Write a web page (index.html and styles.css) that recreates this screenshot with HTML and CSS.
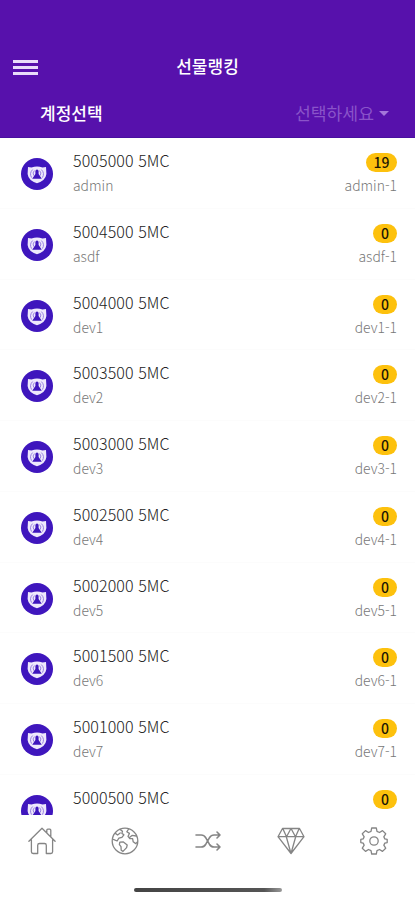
FILE: index.html
```html
<!DOCTYPE html>
<html lang="ko">
<head>
  <meta charset="UTF-8" />
  <meta name="viewport" content="width=device-width, initial-scale=1.0"/>
  <title>선물랭킹</title>
  <link rel="stylesheet" href="styles.css">
</head>
<body>
  <!-- shared avatar -->
  <svg width="0" height="0" class="sprite">
    <symbol id="avatar" viewBox="0 0 32 32">
      <circle cx="16" cy="16" r="16" fill="#3f16bd"/>
      <path d="M7 9 10.5 9.6Q16 7.6 21.5 9.6L25 9 25.4 16Q24.6 22.6 16 25.2 7.4 22.6 6.6 16Z" fill="#eee8fc"/>
      <path d="M10.6 19.6a6.6 6.6 0 0 1 1-8M21.4 19.6a6.6 6.6 0 0 0-1-8M12.8 17.6a4 4 0 0 1 .6-5M19.2 17.6a4 4 0 0 0-.6-5" fill="none" stroke="#8d74dc" stroke-width=".9"/>
      <path d="M14.4 13.2a1.6 1.6 0 0 1 3.2 0v2.8l3.2 4.8h-9.6l3.2-4.8Z" fill="#3f16bd"/>
    </symbol>
  </svg>

  <header>
    <div class="title-bar">
      <button class="menu-btn" aria-label="menu"><span></span><span></span><span></span></button>
      <h1>선물랭킹</h1>
    </div>
    <div class="account-bar">
      <span class="account-label">계정선택</span>
      <span class="account-select">선택하세요 <i class="caret"></i></span>
    </div>
  </header>

  <main>
    <ul class="ranking">
      <li>
        <svg class="avatar"><use href="#avatar"/></svg>
        <div class="info"><strong>5005000 5MC</strong><span>admin</span></div>
        <div class="side"><b class="badge wide">19</b><span>admin-1</span></div>
      </li>
      <li>
        <svg class="avatar"><use href="#avatar"/></svg>
        <div class="info"><strong>5004500 5MC</strong><span>asdf</span></div>
        <div class="side"><b class="badge">0</b><span>asdf-1</span></div>
      </li>
      <li>
        <svg class="avatar"><use href="#avatar"/></svg>
        <div class="info"><strong>5004000 5MC</strong><span>dev1</span></div>
        <div class="side"><b class="badge">0</b><span>dev1-1</span></div>
      </li>
      <li>
        <svg class="avatar"><use href="#avatar"/></svg>
        <div class="info"><strong>5003500 5MC</strong><span>dev2</span></div>
        <div class="side"><b class="badge">0</b><span>dev2-1</span></div>
      </li>
      <li>
        <svg class="avatar"><use href="#avatar"/></svg>
        <div class="info"><strong>5003000 5MC</strong><span>dev3</span></div>
        <div class="side"><b class="badge">0</b><span>dev3-1</span></div>
      </li>
      <li>
        <svg class="avatar"><use href="#avatar"/></svg>
        <div class="info"><strong>5002500 5MC</strong><span>dev4</span></div>
        <div class="side"><b class="badge">0</b><span>dev4-1</span></div>
      </li>
      <li>
        <svg class="avatar"><use href="#avatar"/></svg>
        <div class="info"><strong>5002000 5MC</strong><span>dev5</span></div>
        <div class="side"><b class="badge">0</b><span>dev5-1</span></div>
      </li>
      <li>
        <svg class="avatar"><use href="#avatar"/></svg>
        <div class="info"><strong>5001500 5MC</strong><span>dev6</span></div>
        <div class="side"><b class="badge">0</b><span>dev6-1</span></div>
      </li>
      <li>
        <svg class="avatar"><use href="#avatar"/></svg>
        <div class="info"><strong>5001000 5MC</strong><span>dev7</span></div>
        <div class="side"><b class="badge">0</b><span>dev7-1</span></div>
      </li>
      <li>
        <svg class="avatar"><use href="#avatar"/></svg>
        <div class="info"><strong>5000500 5MC</strong></div>
        <div class="side"><b class="badge">0</b></div>
      </li>
    </ul>
  </main>

  <footer>
    <nav>
      <a><svg viewBox="0 0 28 28"><path d="M.9 14.2 14 1.2l13.1 13M3.4 12.4v12.4q0 1.7 1.7 1.7h4.6v-8.2q0-1.8 1.8-1.8h5q1.8 0 1.8 1.8v8.2h4.6q1.7 0 1.7-1.7V12.4M18.8 5.6V3.2q0-1 1-1h2q1 0 1 1v6.3"/></svg></a>
      <a><svg viewBox="0 0 28 28"><circle cx="14" cy="14" r="12.8"/><path d="M9 2.4 11.5 4.2l-.6 2.2 2 1.4-2 2.6-3 .8-1.8 2.8-3.8-1.6M4.4 6.4 6.6 8l2.6-2M8.8 15.2l3.6-.2 3.8 3-.6 2.6-3.6 3.8-1.8-1.2-.2-3.6-1.6-2ZM17.6 2l-1.8 2.8 2.6 1.6-1.4 3 1.8 2.2h2.8l.6 3.2 2.6 1.8 1.6-1.6M18.8 10.2l2.2-1.8 4.4.6"/></svg></a>
      <a><svg class="shuffle" viewBox="0 0 28 28"><path d="M2 8h5.2q2.8 0 4.6 2.8l3.6 6.4q1.8 2.8 4.6 2.8h6M2 20h5.2q2.8 0 4.6-2.8l3.6-6.4Q17.2 8 20 8h6M23 5l3 3-3 3M23 17l3 3-3 3"/></svg></a>
      <a><svg viewBox="0 0 28 28"><path d="M5.5 1.5h17L27 9.7 14 26.5 1 9.7ZM1 9.7h26M6 2l3.5 7.7L14 1.5l4.5 8.2L22 2M9.3 9.7 14 26.5l4.7-16.8"/></svg></a>
      <a><svg viewBox="0 0 28 28"><path d="M11.7 1h4.6l.7 3.4 2.5 1.1 3-1.9 3.2 3.2-1.9 3 1 2.1 2.4.5v3.2l-2.4.5-1 2.1 1.9 3-3.2 3.2-3-1.9-2.5 1.100-.7 3.400h-4.600l-.7-3.400-2.500-1.100-3 1.900-3.200-3.200 1.900-3-1-2.100-2.400-.5v-3.200l2.400-.5 1-2.100-1.900-3 3.200-3.200 3 1.900L11 4.400Z"/><circle cx="14" cy="14" r="4.200"/></svg></a>
    </nav>
    <div class="home-bar"></div>
  </footer>
</body>
</html>
```
FILE: styles.css
```css
* {
  box-sizing: border-box;
}
body {
  margin: 0;
  height: 900px;
  display: flex;
  flex-direction: column;
  overflow: hidden;
  background-color: #fff;
  font-family: "Noto Sans CJK KR", sans-serif;
}
.sprite {
  display: none;
}

/* header */
header {
  height: 138px;
  flex: none;
  padding-top: 43px;
  background-color: #5711ac;
  border-bottom: 1px solid #4810a0;
  color: #fff;
}
.title-bar {
  height: 46px;
  display: grid;
  grid-template-columns: 50px 1fr 50px;
  align-items: center;
}
.menu-btn {
  width: 25px;
  height: 15px;
  margin: 3px 0 0 13px;
  padding: 0;
  display: flex;
  flex-direction: column;
  justify-content: space-between;
  background: none;
  border: none;
}
.menu-btn span {
  height: 3px;
  background-color: #e9dcfa;
}
h1 {
  margin: 0;
  text-align: center;
  font-size: 17px;
  line-height: 24px;
  font-weight: 500;
}
.account-bar {
  height: 48px;
  padding: 0 26px 0 40px;
  display: flex;
  justify-content: space-between;
  align-items: center;
  font-size: 17px;
  line-height: 24px;
}
.account-label {
  font-weight: 500;
}
.account-select {
  display: flex;
  align-items: center;
  gap: 5px;
  font-size: 17.2px;
  color: #8a54c9;
}
.caret {
  border: 5px solid transparent;
  border-top-color: #a476da;
  border-bottom: 0;
}

/* ranking list */
main {
  flex: 1;
  min-height: 0;
  overflow: hidden;
}
.ranking {
  margin: 0;
  padding: 0;
  list-style: none;
}
.ranking li {
  height: 70.75px;
  padding: 10px 18px 0 21px;
  display: flex;
  border-bottom: 1px solid #fcfcfc;
}
.avatar {
  width: 32px;
  height: 32px;
  margin-top: 10px;
}
.info, .side {
  display: flex;
  flex-direction: column;
}
.info {
  flex: 1;
  padding-left: 20px;
}
.info strong {
  font-size: 16px;
  line-height: 24px;
  font-weight: 300;
  letter-spacing: 0.1px;
  color: #222;
}
.info span, .side span {
  font-size: 13.9px;
  line-height: 26px;
  font-weight: 300;
  color: #777;
}
.side {
  align-items: flex-end;
}
.badge {
  width: 24px;
  height: 19px;
  margin: 5px 0 0;
  border-radius: 10px;
  background-color: #fdc10d;
  color: #1c1605;
  font-size: 14px;
  line-height: 18px;
  font-weight: 500;
  text-align: center;
}
.badge.wide {
  width: 31px;
}

/* bottom tabs */
footer {
  height: 85px;
  flex: none;
  background-color: #fff;
}
nav {
  height: 52px;
  display: grid;
  grid-template-columns: repeat(5, 1fr);
  justify-items: center;
  align-items: center;
}
nav svg {
  display: block;
  width: 28px;
  height: 28px;
  fill: none;
  stroke: #858585;
  stroke-width: 1.3;
  stroke-linejoin: round;
  stroke-linecap: round;
}
nav .shuffle {
  stroke-width: 1.6;
}
.home-bar {
  width: 148px;
  height: 4px;
  margin: 21px auto 0;
  border-radius: 2px;
  background: linear-gradient(to right, #444, #555 88%, #999);
}
```
